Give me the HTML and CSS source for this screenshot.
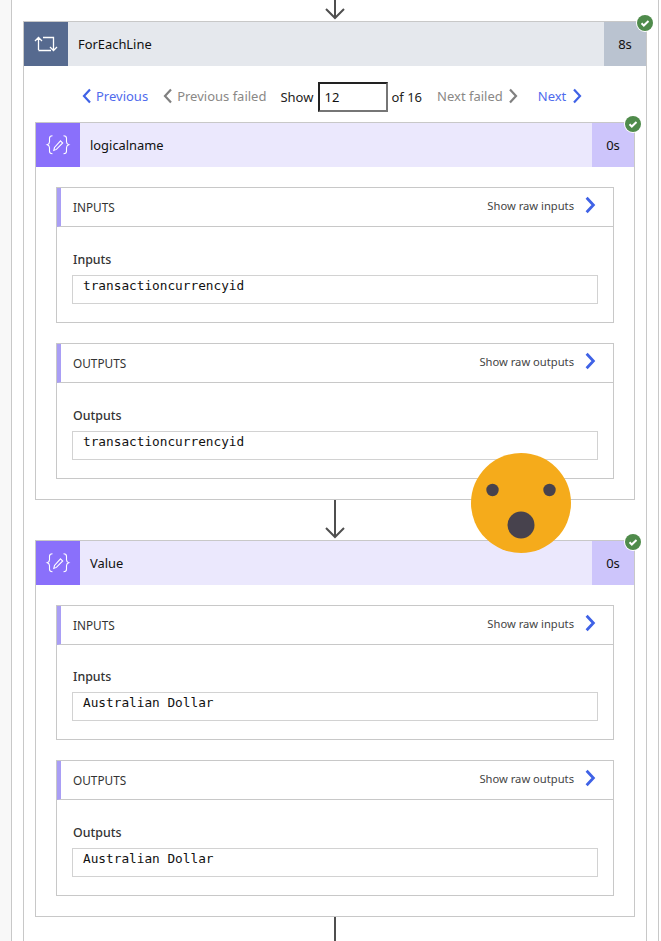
FILE: index.html
```html
<!DOCTYPE html>
<html lang="en">
<head>
    <meta charset="UTF-8">
    <meta name="viewport" content="width=device-width, initial-scale=1.0">
    <title>ForEachLine run</title>
    <link rel="stylesheet" href="styles.css">
</head>
<body>

<svg class="defs" width="0" height="0" aria-hidden="true">
    <symbol id="arrow" viewBox="0 0 20 40"><path d="M10 0V38M1 29l9 9 9-9"/></symbol>
    <symbol id="chev-left" viewBox="0 0 10 16"><path d="M8 1.500 2 8l6 6.500"/></symbol>
    <symbol id="chev-right" viewBox="0 0 10 16"><path d="M2 1.500 8 8l-6 6.500"/></symbol>
    <symbol id="check" viewBox="0 0 18 18">
        <circle cx="9" cy="9" r="8" fill="#4f8b4b"/>
        <path d="M5.500 9.300 7.800 11.500 12.500 7" fill="none" stroke="#fff" stroke-width="2"/>
    </symbol>
    <symbol id="compose" viewBox="0 0 44 44">
        <g fill="none" stroke="#fff" stroke-width="1.100">
            <path d="M16.500 12.800c-2 0-3 .8-3 2.500v3.500c0 1.500-.7 2.500-2.200 3 1.500.5 2.200 1.500 2.200 3v3.500c0 1.700 1 2.500 3 2.500"/>
            <path d="M27.500 12.800c2 0 3 .8 3 2.500v3.500c0 1.500.7 2.500 2.200 3-1.500.5-2.200 1.500-2.200 3v3.500c0 1.700-1 2.500-3 2.500"/>
            <path d="M24.500 17.800 26.700 20 20.400 26.400 17.800 27.400 18.500 24.500Z"/>
        </g>
    </symbol>
</svg>

<div class="page">
    <div class="rail"></div>
    <div class="panel">
        <div class="connector connector-top"><svg class="arrow"><use href="#arrow"/></svg></div>

        <div class="card card-loop">
            <div class="card-head">
                <div class="card-icon">
                    <svg viewBox="0 0 44 44" width="44" height="44">
                        <path d="M14.500 28V15.500M11 19l3.500-3.500L18 19M14.500 28.500H27M19 15.500H29.500V28M26 25l3.500 3.500L33 25" fill="none" stroke="#fff" stroke-width="1.300"/>
                    </svg>
                </div>
                <div class="card-title">ForEachLine</div>
                <div class="card-time">8s</div>
            </div>
            <svg class="badge"><use href="#check"/></svg>

            <div class="pager">
                <a class="pager-link"><svg class="chev"><use href="#chev-left"/></svg>Previous</a>
                <a class="pager-link off"><svg class="chev"><use href="#chev-left"/></svg>Previous failed</a>
                <span class="pager-show">Show</span>
                <input class="pager-input" type="text" value="12">
                <span class="pager-of">of 16</span>
                <a class="pager-link off next-failed">Next failed<svg class="chev"><use href="#chev-right"/></svg></a>
                <a class="pager-link next">Next<svg class="chev"><use href="#chev-right"/></svg></a>
            </div>

            <div class="card card-action">
                <div class="card-head">
                    <div class="card-icon"><svg width="44" height="44"><use href="#compose"/></svg></div>
                    <div class="card-title">logicalname</div>
                    <div class="card-time">0s</div>
                </div>
                <svg class="badge"><use href="#check"/></svg>
                <div class="card-body">
                    <div class="io">
                        <div class="io-head"><span class="io-name">INPUTS</span><span class="io-raw">Show raw inputs</span><svg class="chev-raw"><use href="#chev-right"/></svg></div>
                        <div class="io-body">
                            <div class="io-label">Inputs</div>
                            <div class="io-value">transactioncurrencyid</div>
                        </div>
                    </div>
                    <div class="io">
                        <div class="io-head"><span class="io-name">OUTPUTS</span><span class="io-raw">Show raw outputs</span><svg class="chev-raw"><use href="#chev-right"/></svg></div>
                        <div class="io-body">
                            <div class="io-label">Outputs</div>
                            <div class="io-value">transactioncurrencyid</div>
                        </div>
                    </div>
                </div>
            </div>

            <div class="connector"><svg class="arrow"><use href="#arrow"/></svg></div>

            <div class="card card-action">
                <div class="card-head">
                    <div class="card-icon"><svg width="44" height="44"><use href="#compose"/></svg></div>
                    <div class="card-title">Value</div>
                    <div class="card-time">0s</div>
                </div>
                <svg class="badge"><use href="#check"/></svg>
                <div class="card-body">
                    <div class="io">
                        <div class="io-head"><span class="io-name">INPUTS</span><span class="io-raw">Show raw inputs</span><svg class="chev-raw"><use href="#chev-right"/></svg></div>
                        <div class="io-body io-body-short">
                            <div class="io-label">Inputs</div>
                            <div class="io-value">Australian Dollar</div>
                        </div>
                    </div>
                    <div class="io">
                        <div class="io-head"><span class="io-name">OUTPUTS</span><span class="io-raw">Show raw outputs</span><svg class="chev-raw"><use href="#chev-right"/></svg></div>
                        <div class="io-body">
                            <div class="io-label">Outputs</div>
                            <div class="io-value">Australian Dollar</div>
                        </div>
                    </div>
                </div>
            </div>

            <div class="line-down"></div>
        </div>
    </div>

    <svg class="emoji" viewBox="0 0 100 100" width="100" height="100">
        <circle cx="50" cy="50" r="50" fill="#f5ab1b"/>
        <circle cx="21.500" cy="37" r="6.200" fill="#47424d"/>
        <circle cx="78.500" cy="37" r="6.200" fill="#47424d"/>
        <circle cx="50" cy="72" r="13.500" fill="#47424d"/>
    </svg>
</div>

</body>
</html>
```

FILE: styles.css
```css
body {
    margin: 0;
    background: #fff;
    font-family: 'Noto Sans', 'Open Sans', sans-serif;
    font-size: 13px;
    color: #222;
}
.defs {
    position: absolute;
}
.page {
    position: relative;
    display: flex;
    height: 941px;
    overflow: hidden;
}
.rail {
    width: 11px;
    background: #f8f8f8;
}
.panel {
    width: 624px;
    padding: 0 11px;
    border-left: 1px solid #c8c8c8;
    border-right: 1px solid #c8c8c8;
}
.connector {
    display: flex;
    justify-content: center;
    align-items: flex-end;
    height: 40px;
    overflow: hidden;
}
.connector-top {
    height: 21px;
}
.arrow {
    flex: none;
    width: 20px;
    height: 40px;
    margin-bottom: 1px;
    fill: none;
    stroke: #4f4f4f;
    stroke-width: 2;
}
.card {
    position: relative;
    border: 1px solid #c8c8c8;
}
.card-head {
    display: flex;
    align-items: center;
    height: 44px;
}
.card-icon {
    width: 44px;
    height: 44px;
}
.card-title {
    flex: 1;
    padding-left: 10px;
    font-size: 12.900px;
    color: #111;
}
.card-time {
    width: 42px;
    height: 44px;
    line-height: 44px;
    text-align: center;
    font-size: 13px;
    color: #111;
}
.card-loop .card-head {
    background: #e5e8ed;
}
.card-loop .card-icon {
    background: #566a8f;
}
.card-loop .card-time {
    background: #bac3d0;
}
.card-action {
    margin: 0 11px;
}
.card-action .card-head {
    background: #ebe8fd;
}
.card-action .card-icon {
    background: #8a70fb;
}
.card-action .card-time {
    background: #cdc5fb;
}
.badge {
    position: absolute;
    top: -8px;
    right: -8px;
    width: 18px;
    height: 18px;
    background: #fff;
    border-radius: 50%;
}
.pager {
    display: flex;
    align-items: center;
    height: 51px;
    padding: 5px 0 0 58px;
    font-size: 13px;
}
.pager-link {
    display: flex;
    align-items: center;
    margin-bottom: 2px;
    color: #4f6bed;
}
.pager-link.off {
    margin-left: 15px;
    color: #8a8886;
}
.chev {
    width: 10px;
    height: 16px;
    margin: 0 4px 0 0;
    fill: none;
    stroke: #3f62e6;
    stroke-width: 2.200;
}
.off .chev {
    stroke: #808080;
}
.next-failed .chev {
    margin: 0 0 0 5px;
}
.next .chev {
    margin: 0 0 0 6px;
}
.pager-show {
    margin-left: 14px;
}
.pager-input {
    box-sizing: border-box;
    width: 70px;
    height: 30px;
    margin-left: 5px;
    padding: 0 4px;
    border: 2px solid;
    border-color: #222 #767676 #767676 #222;
    border-radius: 0;
    outline: none;
    font: inherit;
    color: #111;
}
.pager-of {
    margin-left: 3px;
}
.pager-link.next-failed {
    margin-left: 15px;
}
.next {
    margin-left: 20px;
}
.card-body {
    display: flex;
    flex-direction: column;
    gap: 20px;
    padding: 20px;
}
.io {
    border: 1px solid #c8c8c8;
}
.io-head {
    display: flex;
    align-items: center;
    height: 38px;
    padding-right: 17px;
    border-left: 4px solid #a99ef5;
    border-bottom: 1px solid #c8c8c8;
}
.io-name {
    flex: 1;
    padding-left: 12px;
    font-size: 11.800px;
    color: #333;
}
.io-raw {
    margin-bottom: 4px;
    font-size: 11.200px;
    color: #444;
}
.chev-raw {
    width: 12px;
    height: 18px;
    margin: 0 0 4px 10px;
    fill: none;
    stroke: #3f62e6;
    stroke-width: 2.500;
}
.io-body {
    padding: 22px 15px 18px;
}
.io-body-short {
    padding-top: 21px;
}
.io-label {
    height: 26px;
    padding-left: 1px;
    font-size: 12.400px;
    line-height: 22px;
    font-weight: 500;
    color: #333;
}
.io-value {
    height: 27px;
    padding-left: 10px;
    border: 1px solid #d2d2d2;
    font-family: 'DejaVu Sans Mono', monospace;
    font-size: 12.750px;
    line-height: 19px;
    color: #111;
}
.line-down {
    width: 2px;
    height: 40px;
    margin-left: 310px;
    background: #4f4f4f;
}
.emoji {
    position: absolute;
    left: 471px;
    top: 453px;
}
```
